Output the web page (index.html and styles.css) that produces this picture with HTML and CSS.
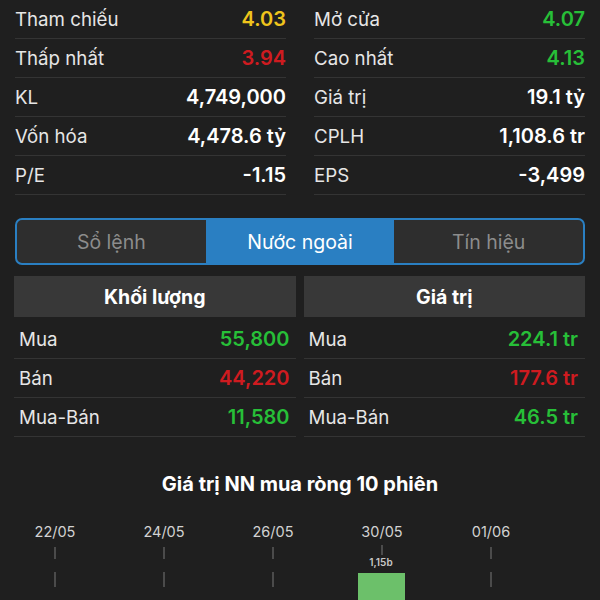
FILE: index.html
```html
<!doctype html>
<html lang="vi">
<head>
  <meta charset="UTF-8">
  <meta name="viewport" content="width=device-width, initial-scale=1.0">
  <title>Nước ngoài</title>
  <link rel="stylesheet" href="styles.css">
</head>
<body>
  <div class="stats">
    <div class="stat-col">
      <div class="stat-row"><span>Tham chiếu</span><b class="ref">4.03</b></div>
      <div class="stat-row"><span>Thấp nhất</span><b class="down">3.94</b></div>
      <div class="stat-row"><span>KL</span><b>4,749,000</b></div>
      <div class="stat-row"><span>Vốn hóa</span><b>4,478.6 tỷ</b></div>
      <div class="stat-row"><span>P/E</span><b>-1.15</b></div>
    </div>
    <div class="stat-col">
      <div class="stat-row"><span>Mở cửa</span><b class="up">4.07</b></div>
      <div class="stat-row"><span>Cao nhất</span><b class="up">4.13</b></div>
      <div class="stat-row"><span>Giá trị</span><b>19.1 tỷ</b></div>
      <div class="stat-row"><span>CPLH</span><b>1,108.6 tr</b></div>
      <div class="stat-row"><span>EPS</span><b>-3,499</b></div>
    </div>
  </div>

  <div class="tabs">
    <div class="tab">Sổ lệnh</div>
    <div class="tab active">Nước ngoài</div>
    <div class="tab">Tín hiệu</div>
  </div>

  <div class="flow">
    <div class="flow-col left">
      <div class="flow-head">Khối lượng</div>
      <div class="flow-row"><span>Mua</span><b class="up">55,800</b></div>
      <div class="flow-row"><span>Bán</span><b class="down">44,220</b></div>
      <div class="flow-row"><span>Mua-Bán</span><b class="up">11,580</b></div>
    </div>
    <div class="flow-col right">
      <div class="flow-head">Giá trị</div>
      <div class="flow-row"><span>Mua</span><b class="up">224.1 tr</b></div>
      <div class="flow-row"><span>Bán</span><b class="down">177.6 tr</b></div>
      <div class="flow-row"><span>Mua-Bán</span><b class="up">46.5 tr</b></div>
    </div>
  </div>

  <h2 class="chart-title">Giá trị NN mua ròng 10 phiên</h2>

  <svg class="chart" viewBox="0 0 600 100" width="600" height="100">
    <g class="grid">
      <line x1="55" y1="47" x2="55" y2="59"/><line x1="55" y1="72" x2="55" y2="87"/>
      <line x1="164" y1="47" x2="164" y2="59"/><line x1="164" y1="72" x2="164" y2="87"/>
      <line x1="273" y1="47" x2="273" y2="59"/><line x1="273" y1="72" x2="273" y2="87"/>
      <line x1="382" y1="45" x2="382" y2="55"/>
      <line x1="491" y1="47" x2="491" y2="59"/><line x1="491" y1="72" x2="491" y2="87"/>
    </g>
    <g class="dates">
      <text x="55" y="37">22/05</text>
      <text x="164" y="37">24/05</text>
      <text x="273" y="37">26/05</text>
      <text x="382" y="37">30/05</text>
      <text x="491" y="37">01/06</text>
    </g>
    <text class="bar-label" x="381" y="66">1,15b</text>
    <rect class="bar" x="358" y="73" width="47" height="30"/>
  </svg>
</body>
</html>
```

FILE: styles.css
```css
:root {
  --bg: #1f1f1f;
  --line: #343434;
  --text: #e6e6e6;
  --up: #27bf38;
  --down: #cf1b20;
  --ref: #efc41c;
  --blue: #2a7fc2;
}

* {
  box-sizing: border-box;
  margin: 0;
  padding: 0;
}

body {
  background: var(--bg);
  color: var(--text);
  font-family: Inter, Roboto, "Noto Sans", sans-serif;
  font-size: 18.7px;
  width: 600px;
  height: 600px;
  overflow: hidden;
}

b {
  font-size: 20px;
  font-weight: 600;
  color: #fff;
}

.up { color: var(--up); }
.down { color: var(--down); }
.ref { color: var(--ref); }

.stats {
  display: grid;
  grid-template-columns: 1fr 1fr;
  gap: 28px;
  padding: 0 15px;
}

.stat-row {
  height: 39px;
  display: flex;
  justify-content: space-between;
  align-items: center;
  border-bottom: 1px solid var(--line);
}

.tabs {
  margin: 23px 15px 0;
  height: 47px;
  border: 2px solid var(--blue);
  border-radius: 7px;
  background: #2e2e2e;
  display: grid;
  grid-template-columns: repeat(3, 1fr);
  overflow: hidden;
  font-size: 19.5px;
}

.tab {
  display: flex;
  align-items: center;
  justify-content: center;
  color: #8c8c8c;
}

.tab.active {
  background: var(--blue);
  color: #fff;
}

.flow {
  display: grid;
  grid-template-columns: 1fr 1fr;
  gap: 8px;
  padding: 0 15px 0 14px;
  margin-top: 11px;
}

.flow-head {
  height: 41px;
  background: #383838;
  display: flex;
  align-items: center;
  justify-content: center;
  font-size: 19.5px;
  font-weight: 700;
  color: #fff;
  margin-bottom: 3px;
}

.flow-row {
  height: 39px;
  display: flex;
  justify-content: space-between;
  align-items: center;
  border-bottom: 1px solid var(--line);
  padding: 0 6px 0 5px;
}

.right .flow-row {
  padding: 0 7px 0 5px;
}

.chart-title {
  margin-top: 33px;
  line-height: 28px;
  font-size: 20px;
  font-weight: 700;
  text-align: center;
  color: #fff;
}

.chart {
  display: block;
  margin-top: 2px;
}

.grid line {
  stroke: #6a6a6a;
  stroke-width: 1.2;
}

.dates text {
  font-family: Inter, Roboto, sans-serif;
  font-size: 14.5px;
  fill: #d2d2d2;
  text-anchor: middle;
}

.bar-label {
  font-family: Inter, Roboto, sans-serif;
  font-size: 10px;
  font-weight: 600;
  fill: #c8c8c8;
  text-anchor: middle;
}

.bar {
  fill: #6cc06a;
}
```
